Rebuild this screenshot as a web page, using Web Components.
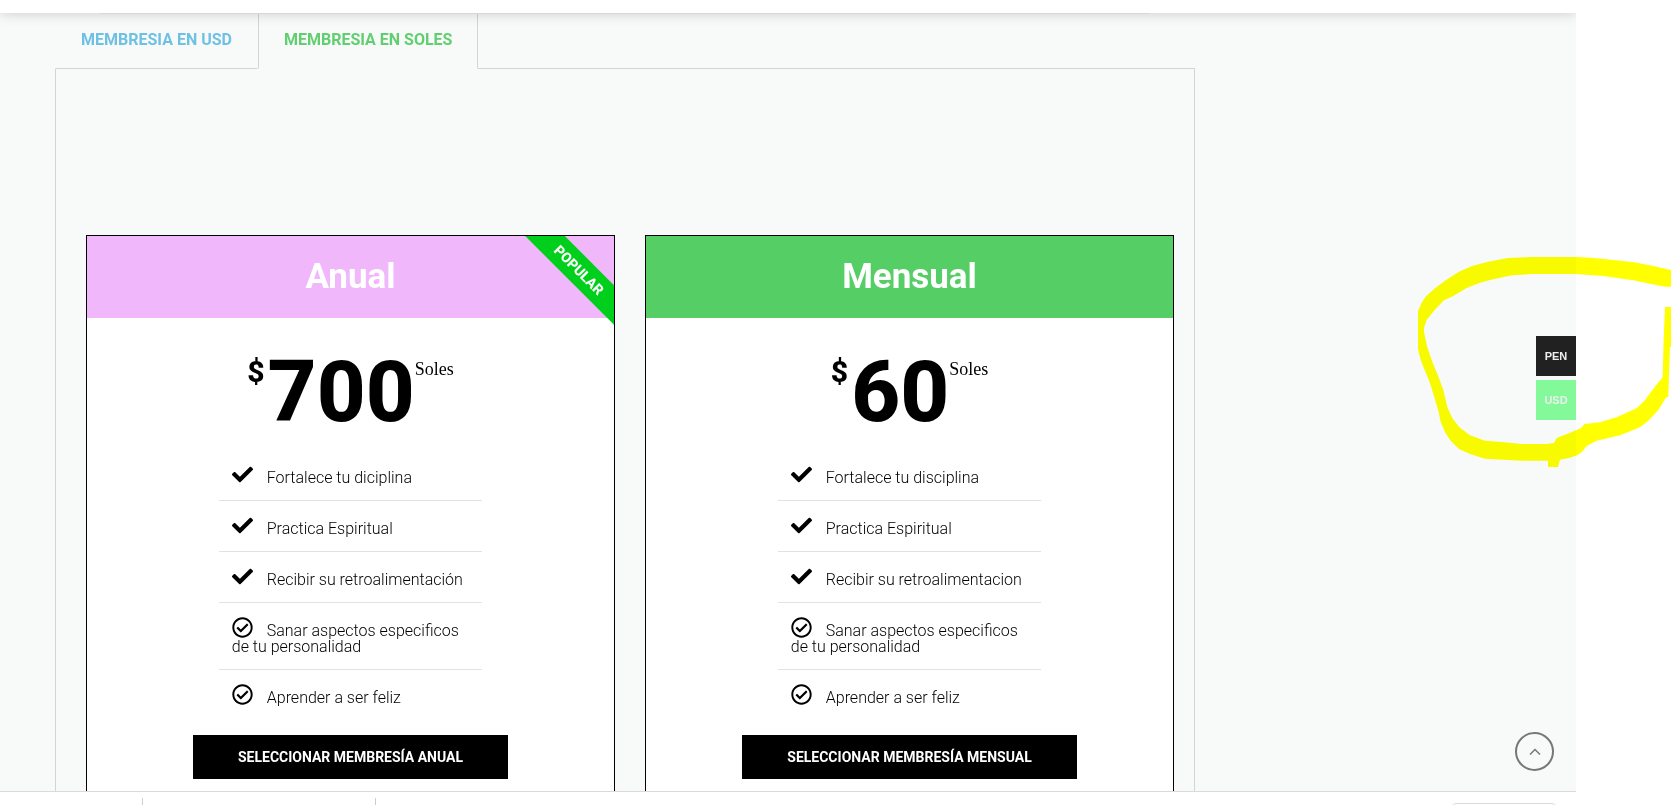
<!DOCTYPE html>
<html lang="es">
<head>
<meta charset="utf-8">
<title>Membresías</title>
<style>
  body {
    margin: 0;
    background: #fff;
    font-family: Roboto, "Liberation Sans", sans-serif;
    font-size: 16px;
    color: #000;
  }
</style>
</head>
<body>
<membership-page>
  <membership-tabs>
    <tab-button slot="tab" color="#6ec1e4">Membresia en USD</tab-button>
    <tab-button slot="tab" color="#61ce70" active>Membresia en Soles</tab-button>
    <price-card name="Anual" price="700" period="Soles" color="#f0b8fa" ribbon="Popular" action="Seleccionar membresía anual">
      <price-feature icon="check">Fortalece tu diciplina</price-feature>
      <price-feature icon="check">Practica Espiritual</price-feature>
      <price-feature icon="check">Recibir su retroalimentación</price-feature>
      <price-feature icon="circle">Sanar aspectos especificos de tu personalidad</price-feature>
      <price-feature icon="circle">Aprender a ser feliz</price-feature>
    </price-card>
    <price-card name="Mensual" price="60" period="Soles" color="#56ce66" action="Seleccionar membresía mensual">
      <price-feature icon="check">Fortalece tu disciplina</price-feature>
      <price-feature icon="check">Practica Espiritual</price-feature>
      <price-feature icon="check">Recibir su retroalimentacion</price-feature>
      <price-feature icon="circle">Sanar aspectos especificos de tu personalidad</price-feature>
      <price-feature icon="circle">Aprender a ser feliz</price-feature>
    </price-card>
  </membership-tabs>
  <currency-switcher slot="floating"></currency-switcher>
  <scroll-top slot="floating"></scroll-top>
</membership-page>
<marker-ring></marker-ring>

<script>
class MembershipPage extends HTMLElement {
  constructor() {
    super();
    this.attachShadow({ mode: "open" });
  }

  connectedCallback() {
    this.shadowRoot.innerHTML = `
      <style>
        :host {
          display: grid;
          grid-template-rows: 13px minmax(0, 1fr) 14px;
          position: relative;
          height: 100vh;
          margin-right: 95px;
          overflow: hidden;
        }
        header {
          position: relative;
          z-index: 1;
          background: #fff;
          box-shadow: 0 0 14px rgba(0, 0, 0, 0.2);
        }
        .rule {
          max-width: 1050px;
          margin-left: 100px;
          padding-top: 13px;
          border-bottom: 1px solid #d8d8d8;
        }
        main {
          background: #f8faf9;
          overflow: hidden;
          padding-left: 55px;
        }
        footer {
          display: flex;
          box-sizing: border-box;
          border-top: 1px solid #dadada;
          padding-top: 6px;
          background: #fff;
        }
        .cell {
          box-sizing: border-box;
          border-right: 1px solid #ccc;
        }
        .first { width: 143px; }
        .second { width: 233px; }
        .box {
          box-sizing: border-box;
          width: 104px;
          height: 20px;
          margin: 5px 20px 0 auto;
          border: 1px solid #dadada;
          border-radius: 4px;
        }
      </style>
      <header><div class="rule"></div></header>
      <main><slot></slot></main>
      <footer>
        <div class="cell first"></div>
        <div class="cell second"></div>
        <div class="box"></div>
      </footer>
      <slot name="floating"></slot>
    `;
  }
}

class MembershipTabs extends HTMLElement {
  constructor() {
    super();
    this.attachShadow({ mode: "open" });
  }

  connectedCallback() {
    this.shadowRoot.innerHTML = `
      <style>
        :host {
          display: block;
          max-width: 1140px;
        }
        .tabs {
          display: flex;
        }
        .rest {
          flex: 1;
          border-bottom: 1px solid #d4d4d4;
        }
        .panel {
          display: grid;
          grid-template-columns: 1fr 1fr;
          gap: 30px;
          padding: 166px 20px 60px 30px;
          border: 1px solid #d4d4d4;
          border-top: 0;
        }
      </style>
      <div class="tabs" role="tablist">
        <slot name="tab"></slot>
        <div class="rest"></div>
      </div>
      <div class="panel"><slot></slot></div>
    `;
  }
}

class TabButton extends HTMLElement {
  constructor() {
    super();
    this.attachShadow({ mode: "open" });
  }

  connectedCallback() {
    const color = this.getAttribute("color");
    const active = this.hasAttribute("active");

    this.shadowRoot.innerHTML = `
      <style>
        :host {
          display: block;
        }
        button {
          display: block;
          box-sizing: border-box;
          height: 56px;
          padding: 0 25px 2px;
          border: 1px solid transparent;
          border-width: 0 1px 1px;
          border-color: ${active ? "#d4d4d4 #d4d4d4 transparent" : "transparent transparent #d4d4d4"};
          background: none;
          color: ${color};
          font: 700 16px/16px Roboto, "Liberation Sans", sans-serif;
          text-transform: uppercase;
        }
      </style>
      <button type="button" role="tab" aria-selected="${active}"><slot></slot></button>
    `;
  }
}

class PriceCard extends HTMLElement {
  constructor() {
    super();
    this.attachShadow({ mode: "open" });
  }

  connectedCallback() {
    const name = this.getAttribute("name");
    const price = this.getAttribute("price");
    const period = this.getAttribute("period");
    const color = this.getAttribute("color");
    const ribbon = this.getAttribute("ribbon");
    const action = this.getAttribute("action");

    this.shadowRoot.innerHTML = `
      <style>
        :host {
          display: block;
          position: relative;
          overflow: hidden;
          border: 1px solid #000;
          background: #fff;
          text-align: center;
        }
        h3 {
          margin: 0;
          padding: 20px 0;
          background: ${color};
          color: #fff;
          font-size: 35px;
          font-weight: 700;
          line-height: 42px;
        }
        .price {
          display: flex;
          justify-content: center;
          align-items: flex-start;
          padding: 39px 0 23px;
          font-weight: 800;
        }
        .currency {
          font-size: 30px;
          line-height: 30px;
          margin-right: 3px;
        }
        .amount {
          font-size: 85px;
          line-height: 70px;
        }
        .period {
          font: 400 18px/24px "Roboto Slab", "Liberation Serif", serif;
        }
        ul {
          width: 50%;
          margin: 0 auto;
          padding: 0;
          text-align: left;
        }
        .footer {
          padding: 15px 0 30px;
        }
        .footer button {
          height: 44px;
          padding: 0 45px;
          border: 0;
          background: #000;
          color: #fff;
          font: 700 14px/14px Roboto, "Liberation Sans", sans-serif;
          text-transform: uppercase;
        }
        .ribbon {
          position: absolute;
          top: 0;
          right: 0;
          width: 150px;
          background: #00d01b;
          color: #fff;
          font-size: 14px;
          font-weight: 800;
          line-height: 28px;
          text-transform: uppercase;
          transform: translate(40px, 20px) rotate(45deg);
        }
      </style>
      <h3>${name}</h3>
      <div class="price">
        <span class="currency">$</span>
        <span class="amount">${price}</span>
        <span class="period">${period}</span>
      </div>
      <ul><slot></slot></ul>
      <div class="footer"><button type="button">${action}</button></div>
      ${ribbon ? `<div class="ribbon">${ribbon}</div>` : ""}
    `;
  }
}

class PriceFeature extends HTMLElement {
  constructor() {
    super();
    this.attachShadow({ mode: "open" });
  }

  connectedCallback() {
    const icons = {
      check: "M173.898 439.404l-166.4-166.4c-9.997-9.997-9.997-26.206 0-36.204l36.203-36.204c9.997-9.998 26.207-9.998 36.204 0L192 312.69 432.095 72.596c9.997-9.997 26.207-9.997 36.204 0l36.203 36.204c9.997 9.997 9.997 26.206 0 36.204l-294.4 294.401c-9.998 9.997-26.207 9.997-36.204-.001z",
      circle: "M256 8C119.033 8 8 119.033 8 256s111.033 248 248 248 248-111.033 248-248S392.967 8 256 8zm0 48c110.532 0 200 89.451 200 200 0 110.532-89.451 200-200 200-110.532 0-200-89.451-200-200 0-110.532 89.451-200 200-200m140.204 130.267l-22.536-22.718c-4.667-4.705-12.265-4.736-16.97-.068L215.346 303.697l-59.792-60.277c-4.667-4.705-12.265-4.736-16.97-.069l-22.719 22.536c-4.705 4.667-4.736 12.265-.068 16.971l90.781 91.516c4.667 4.705 12.265 4.736 16.97.068l172.589-171.204c4.704-4.668 4.734-12.266.067-16.971z"
    };

    this.shadowRoot.innerHTML = `
      <style>
        :host {
          display: list-item;
          list-style: none;
          padding: 14px 13px;
          font-weight: 300;
          line-height: 16px;
        }
        :host(:not(:first-of-type)) {
          border-top: 1px solid #e2e2e2;
        }
        svg {
          width: 21px;
          height: 21px;
          margin-right: 14px;
          vertical-align: -2px;
        }
      </style>
      <svg viewBox="0 0 512 512" aria-hidden="true"><path d="${icons[this.getAttribute("icon")]}"/></svg><slot></slot>
    `;
  }
}

class CurrencySwitcher extends HTMLElement {
  constructor() {
    super();
    this.attachShadow({ mode: "open" });
  }

  connectedCallback() {
    this.shadowRoot.innerHTML = `
      <style>
        :host {
          display: grid;
          gap: 4px;
          position: absolute;
          top: 336px;
          right: 0;
          background: #f8f8f8;
        }
        button {
          width: 40px;
          height: 40px;
          padding: 0;
          border: 0;
          background: #212121;
          color: #eee;
          font: 700 11px/11px "Liberation Sans", Arial, sans-serif;
        }
        .current {
          background: #84f99a;
        }
      </style>
      <button type="button">PEN</button>
      <button type="button" class="current">USD</button>
    `;
  }
}

class ScrollTop extends HTMLElement {
  constructor() {
    super();
    this.attachShadow({ mode: "open" });
  }

  connectedCallback() {
    this.shadowRoot.innerHTML = `
      <style>
        :host {
          display: block;
          position: absolute;
          right: 22px;
          bottom: 34px;
        }
        button {
          display: grid;
          place-items: center;
          width: 39px;
          height: 39px;
          padding: 0;
          border: 2px solid #777;
          border-radius: 50%;
          background: none;
        }
      </style>
      <button type="button" aria-label="Volver arriba">
        <svg width="12" height="8" viewBox="0 0 12 8" fill="none" stroke="#777" stroke-width="1.5"><path d="M1 6.5L6 1.5L11 6.5"/></svg>
      </button>
    `;
  }
}

class MarkerRing extends HTMLElement {
  constructor() {
    super();
    this.attachShadow({ mode: "open" });
  }

  connectedCallback() {
    this.shadowRoot.innerHTML = `
      <style>
        :host {
          position: absolute;
          top: 240px;
          right: 0;
          pointer-events: none;
          mix-blend-mode: multiply;
        }
        svg {
          display: block;
        }
      </style>
      <svg width="271" height="240" viewBox="0 0 813 720" fill="#ff0" aria-hidden="true">
        <path d="M813 90L756 77L702 67L640 60L582 54L530 51H396L324 54L264 65L216 78L177 95L138 120L105 145L78 169L64 190L54 214V327L62 360L74 390L90 430L103 472L116 516L122 546L136 578L153 604L178 628L210 642L255 656L364 662H444V681H474L480 659L506 654L532 646L548 634L560 618L590 602L660 586L700 570L722 560L745 542L775 510L797 474L805 470L807 400L810 321H813V201H795L791 300L788 412L760 446L735 480L712 503L690 514L650 532L600 547L554 552L543 564L510 578L470 594L462 609L440 612H367L305 606L255 602L210 586L178 562L158 536L142 502L130 450L116 412L96 363L82 322L72 276V264L80 240L102 212L132 181L160 168L200 144L240 128L270 120L336 106L396 102H525L610 108L700 121L750 131L795 140H813Z"/>
      </svg>
    `;
  }
}

customElements.define("membership-page", MembershipPage);
customElements.define("membership-tabs", MembershipTabs);
customElements.define("tab-button", TabButton);
customElements.define("price-card", PriceCard);
customElements.define("price-feature", PriceFeature);
customElements.define("currency-switcher", CurrencySwitcher);
customElements.define("scroll-top", ScrollTop);
customElements.define("marker-ring", MarkerRing);
</script>
</body>
</html>
